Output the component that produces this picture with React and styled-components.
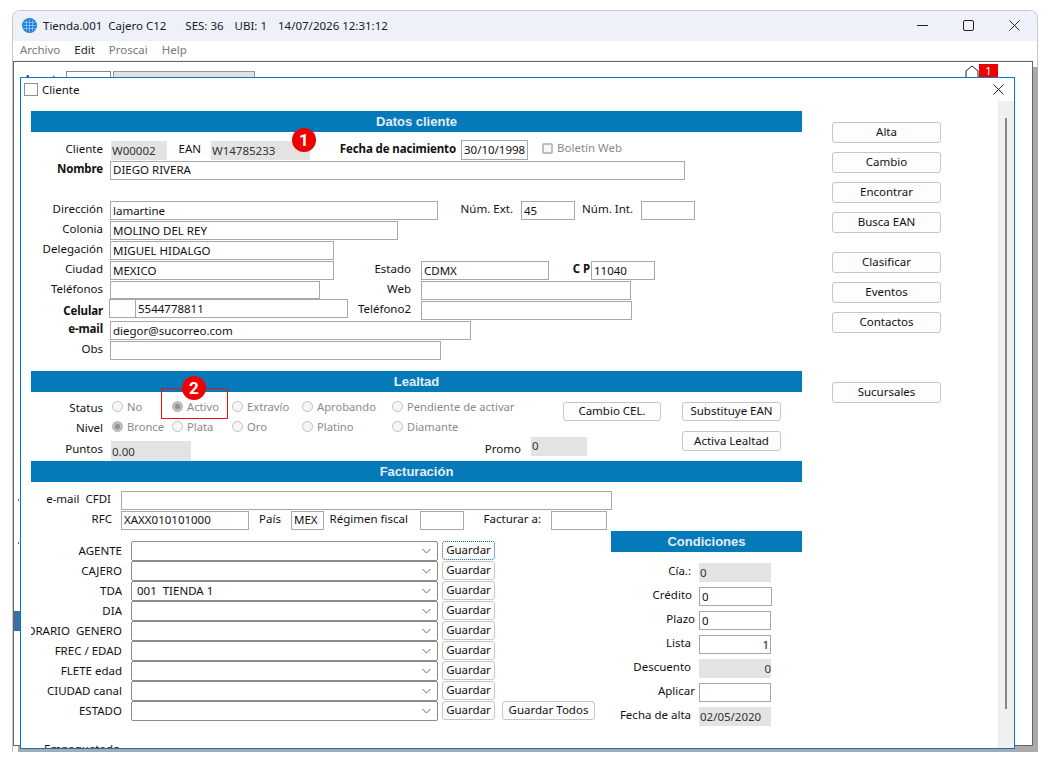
import React from "react";
import styled, { createGlobalStyle } from "styled-components";

const GlobalStyle = createGlobalStyle`
  html, body {
    margin: 0;
    padding: 0;
    background: #ffffff;
  }
  body {
    font-family: "Noto Sans", "Open Sans", sans-serif;
    font-size: 11.5px;
    color: #111111;
  }
`;

const Page = styled.div`
  width: 1049px;
  height: 763px;
  padding: 10px 0 0 12px;
  box-sizing: border-box;
  overflow: hidden;
`;

const AppWindow = styled.div`
  width: 1026px;
  height: 742px;
  display: flex;
  flex-direction: column;
  box-sizing: border-box;
  border: 1px solid #c8c8c8;
  border-bottom: none;
  border-radius: 8px 8px 0 0;
  background: #ffffff;
`;

const TitleBar = styled.div`
  height: 30px;
  flex: none;
  box-sizing: border-box;
  display: flex;
  align-items: center;
  padding: 0 0 1px 9px;
  background: #eef1f9;
  border-radius: 7px 7px 0 0;
  color: #1a1a1a;
`;

const TitleText = styled.span`
  margin-left: ${(p) => p.$ml || 0}px;
  white-space: pre;
`;

const WinButtons = styled.div`
  margin-left: auto;
  display: flex;
  align-self: flex-start;
`;

const WinButton = styled.div`
  width: 46px;
  height: 28px;
  display: flex;
  align-items: center;
  justify-content: center;
`;

const MenuBar = styled.div`
  height: 19px;
  flex: none;
  box-sizing: border-box;
  display: flex;
  align-items: center;
  padding: 0 0 2px 7px;
  gap: 14px;
`;

const MenuItem = styled.span`
  color: ${(p) => (p.$active ? "#222222" : "#777777")};
`;

const Desktop = styled.div`
  position: relative;
  flex: none;
  height: 686px;
  margin-right: 4px;
  border-top: 1px solid #f0f0f0;
  box-sizing: border-box;
`;

const DesktopFrame = styled.div`
  height: 100%;
  box-sizing: border-box;
  border: 1px solid #666666;
  box-shadow: 5px 6px 0 #aaaaaa;
  background: #ffffff;
  padding: 9px 0 0 10px;
  display: flex;
  align-items: flex-start;
`;

const BackLabel = styled.span`
  width: 42px;
  line-height: 16px;
`;

const BackInput = styled.div`
  width: 45px;
  height: 20px;
  box-sizing: border-box;
  border: 1px solid #888888;
  margin-right: 2px;
`;

const BackField = styled.div`
  width: 142px;
  height: 20px;
  box-sizing: border-box;
  background: #e2e2e2;
  border: 1px solid #999999;
  border-bottom: none;
`;

const BackBadge = styled.div`
  margin-left: auto;
  margin-right: 34px;
  margin-top: -7px;
  display: flex;
  align-items: flex-start;
`;

const NotifyCount = styled.span`
  width: 19px;
  height: 13px;
  background: #ee0000;
  color: #ffffff;
  font-size: 11px;
  line-height: 13px;
  text-align: center;
`;

const SideTab = styled.div`
  position: absolute;
  left: 1px;
  top: 550px;
  width: 6px;
  height: 20px;
  background: #3a6ea5;
`;

const SideTick = styled.div`
  position: absolute;
  left: 5px;
  top: ${(p) => p.$top}px;
  width: 1px;
  height: 2px;
  background: #666666;
`;

const ChildWindow = styled.div`
  position: absolute;
  left: 7px;
  top: 16px;
  width: 995px;
  height: 672px;
  box-sizing: border-box;
  display: flex;
  flex-direction: column;
  background: #ffffff;
  border: 1px solid #0078d7;
  overflow: hidden;
`;

const ChildTitle = styled.div`
  height: 23px;
  flex: none;
  display: flex;
  align-items: center;
  padding-left: 3px;
  gap: 4px;
`;

const ChildIcon = styled.span`
  width: 14px;
  height: 13px;
  box-sizing: border-box;
  border: 1px solid #8f8fa8;
  background: #fffef8;
`;

const ChildClose = styled.div`
  margin-left: auto;
  margin-right: 10px;
  display: flex;
`;

const ChildBody = styled.div`
  flex: 1;
  min-height: 0;
  display: flex;
`;

const Form = styled.div`
  flex: 1;
  display: flex;
  padding: 10px 0 0 10px;
  overflow: hidden;
`;

const MainColumn = styled.div`
  width: 771px;
  flex: none;
`;

const ActionColumn = styled.div`
  display: flex;
  flex-direction: column;
  margin: 11px 0 0 30px;
  gap: 9px;
`;

const Scrollbar = styled.div`
  width: 16px;
  flex: none;
  background: #f0f0f0;
  display: flex;
  justify-content: center;
  padding-top: 17px;
  box-sizing: border-box;
`;

const ScrollThumb = styled.div`
  width: 2px;
  height: 591px;
  background: #888888;
`;

const SectionBar = styled.div`
  height: 21px;
  background: #047abb;
  color: #e4edf5;
  font-family: "Liberation Sans", sans-serif;
  font-weight: 700;
  font-size: 13px;
  line-height: 21px;
  text-align: center;
  margin-top: ${(p) => p.$mt || 0}px;
`;

const Row = styled.div`
  display: flex;
  align-items: flex-start;
  height: ${(p) => p.$h || 20}px;
  margin-top: ${(p) => p.$mt || 0}px;
`;

const Label = styled.span`
  display: flex;
  flex: none;
  justify-content: flex-end;
  width: ${(p) => p.$w}px;
  margin-left: ${(p) => p.$ml || 0}px;
  margin-top: ${(p) => p.$top ?? -2}px;
  line-height: 20px;
  font-weight: ${(p) => (p.$bold ? 700 : 400)};
  letter-spacing: ${(p) => (p.$bold ? "-0.12px" : "normal")};
  white-space: pre;
  overflow: ${(p) => (p.$clip ? "hidden" : "visible")};
`;

const Input = styled.input`
  display: block;
  flex: none;
  box-sizing: border-box;
  width: ${(p) => p.$w}px;
  height: ${(p) => p.$h || 19}px;
  margin: ${(p) => p.$top || 0}px 0 0 ${(p) => p.$ml || 0}px;
  padding: 0 1px ${(p) => p.$pb || 0}px 2px;
  border: 1px solid #a8a8a8;
  border-radius: 0;
  outline: none;
  background: #ffffff;
  color: #111111;
  font: inherit;
  text-align: ${(p) => (p.$right ? "right" : "left")};
`;

const GreyField = styled.div`
  flex: none;
  box-sizing: border-box;
  position: relative;
  width: ${(p) => p.$w}px;
  height: ${(p) => p.$h || 19}px;
  margin: ${(p) => p.$top || 0}px 0 0 ${(p) => p.$ml || 0}px;
  padding: ${(p) => p.$pt ?? 2}px 0 0 1px;
  background: #e3e3e3;
  color: #333333;
  line-height: 16px;
  text-align: ${(p) => (p.$right ? "right" : "left")};
`;

const Badge = styled.span`
  position: absolute;
  left: ${(p) => p.$x}px;
  top: ${(p) => p.$y}px;
  width: 24px;
  height: 24px;
  border-radius: 50%;
  background: radial-gradient(circle at 50% 45%, #f00000 60%, #d80000 100%);
  color: #ffffff;
  font-family: "Roboto", "Liberation Sans", sans-serif;
  font-weight: 700;
  font-size: 17px;
  line-height: 24px;
  text-align: center;
  z-index: 2;
`;

const WebCheck = styled.span`
  display: flex;
  align-items: center;
  margin-left: ${(p) => p.$ml}px;
  color: #8a8a8a;
  line-height: 16px;
  gap: 4px;
`;

const CheckBox = styled.span`
  width: 11px;
  height: 11px;
  box-sizing: border-box;
  border: 2px solid #bdbdbd;
  border-radius: 2px;
  background: #f6f6f6;
`;

const RadioGroup = styled.div`
  display: flex;
  flex: none;
  margin-left: 9px;
`;

const RadioItem = styled.span`
  display: flex;
  flex: none;
  align-items: center;
  position: relative;
  gap: 4px;
  width: ${(p) => p.$w}px;
  height: 17px;
  color: #8a8a8a;
  font-size: 11.2px;
  white-space: nowrap;
`;

const RadioDot = styled.span`
  width: 11px;
  height: 11px;
  flex: none;
  box-sizing: border-box;
  border-radius: 50%;
  border: ${(p) => (p.$on ? "3px solid #bcbcbc" : "1px solid #c0c0c0")};
  background: ${(p) => (p.$on ? "#8f8f8f" : "#f6f6f6")};
`;

const Highlight = styled.span`
  position: absolute;
  left: -11px;
  top: -10px;
  width: 67px;
  height: 31px;
  box-sizing: border-box;
  border: 1px solid #e81010;
  pointer-events: none;
`;

const Button = styled.button`
  display: block;
  flex: none;
  box-sizing: border-box;
  width: ${(p) => p.$w}px;
  height: ${(p) => p.$h || 19}px;
  margin: ${(p) => p.$top || 0}px 0 ${(p) => p.$mb || 0}px ${(p) => p.$ml || 0}px;
  padding: 0 0 2px;
  border: 1px solid #c6c6c6;
  border-radius: 3px;
  background: #fdfdfd;
  color: #111111;
  font: inherit;
  ${(p) => p.$focused && "border: 1px dotted #0a5fa8;"}
`;

const Billing = styled.div`
  display: flex;
`;

const SelectColumn = styled.div`
  width: 580px;
  flex: none;
  padding-top: 10px;
`;

const ConditionColumn = styled.div`
  width: 191px;
  flex: none;
`;

const ConditionRows = styled.div`
  padding-top: 11px;
`;

const Select = styled.div`
  flex: none;
  box-sizing: border-box;
  width: 307px;
  height: 20px;
  margin-left: 9px;
  padding-right: 6px;
  display: flex;
  align-items: center;
  justify-content: space-between;
  border: 1px solid #8c8c8c;
  border-radius: 2px;
  background: #ffffff;
`;

const SelectText = styled.span`
  padding: 0 0 2px 5px;
  white-space: pre;
`;

const Chevron = () => (
  <svg width="9" height="6" viewBox="0 0 9 6" fill="none" stroke="#666" strokeWidth="1">
    <path d="M.5 1 4.5 5 8.5 1" />
  </svg>
);

const CloseIcon = () => (
  <svg width="11" height="11" viewBox="0 0 11 11" fill="none" stroke="#222" strokeWidth="1">
    <path d="M.5.5l10 10M10.5.5l-10 10" />
  </svg>
);

const Globe = () => (
  <svg width="15" height="15" viewBox="0 0 15 15">
    <circle cx="7.5" cy="7.5" r="7.5" fill="#1d7fe0" />
    <g stroke="#9fd0f8" strokeWidth=".7" fill="none">
      <path d="M4.5 2v11M7.5 1v13M10.5 2v11M1.5 4.5h12M1 7.5h13M1.5 10.5h12" />
    </g>
  </svg>
);

const statusOptions = [
  { label: "No", w: 60 },
  { label: "Activo", w: 60, on: true, marked: true },
  { label: "Extravío", w: 70 },
  { label: "Aprobando", w: 90 },
  { label: "Pendiente de activar", w: 130 },
];

const levelOptions = [
  { label: "Bronce", w: 60, on: true },
  { label: "Plata", w: 60 },
  { label: "Oro", w: 70 },
  { label: "Platino", w: 90 },
  { label: "Diamante", w: 130 },
];

const selects = [
  { label: "AGENTE", focused: true },
  { label: "CAJERO" },
  { label: "TDA", value: "001  TIENDA 1" },
  { label: "DIA" },
  { label: "HORARIO  GENERO" },
  { label: "FREC / EDAD" },
  { label: "FLETE edad" },
  { label: "CIUDAD canal" },
  { label: "ESTADO", all: true },
];

const actions = [
  { label: "Alta" },
  { label: "Cambio" },
  { label: "Encontrar" },
  { label: "Busca EAN", mb: 10 },
  { label: "Clasificar" },
  { label: "Eventos" },
  { label: "Contactos", mb: 40 },
  { label: "Sucursales" },
];

const RadioRow = ({ options }) => (
  <RadioGroup>
    {options.map((o) => (
      <RadioItem key={o.label} $w={o.w}>
        <RadioDot $on={o.on} />
        {o.label}
        {o.marked && (
          <>
            <Highlight />
            <Badge $x={10} $y={-22}>2</Badge>
          </>
        )}
      </RadioItem>
    ))}
  </RadioGroup>
);

export default function App() {
  return (
    <Page>
      <GlobalStyle />
      <AppWindow>
        <TitleBar>
          <Globe />
          <TitleText $ml={6}>Tienda.001  Cajero C12</TitleText>
          <TitleText $ml={19}>SES: 36</TitleText>
          <TitleText $ml={11}>UBI: 1</TitleText>
          <TitleText $ml={11}>14/07/2026 12:31:12</TitleText>
          <WinButtons>
            <WinButton>
              <svg width="11" height="11" viewBox="0 0 11 11" stroke="#222"><path d="M0 5.5h11" /></svg>
            </WinButton>
            <WinButton>
              <svg width="11" height="11" viewBox="0 0 11 11" fill="none" stroke="#222"><rect x=".5" y=".5" width="10" height="10" rx="1.5" /></svg>
            </WinButton>
            <WinButton>
              <CloseIcon />
            </WinButton>
          </WinButtons>
        </TitleBar>
        <MenuBar>
          <MenuItem>Archivo</MenuItem>
          <MenuItem $active>Edit</MenuItem>
          <MenuItem>Proscai</MenuItem>
          <MenuItem>Help</MenuItem>
        </MenuBar>
        <Desktop>
          <DesktopFrame>
            <BackLabel>Agente</BackLabel>
            <BackInput />
            <BackField />
            <BackBadge>
              <svg width="14" height="20" viewBox="0 0 14 20" fill="none" stroke="#222" strokeWidth="1">
                <path d="M1 19V7l6-5 6 5v12" />
              </svg>
              <NotifyCount>1</NotifyCount>
            </BackBadge>
          </DesktopFrame>
          <SideTab />
          <SideTick $top={438} />
          <SideTick $top={481} />
          <ChildWindow>
            <ChildTitle>
              <ChildIcon />
              Cliente
              <ChildClose>
                <CloseIcon />
              </ChildClose>
            </ChildTitle>
            <ChildBody>
              <Form>
                <MainColumn>
                  <SectionBar>Datos cliente</SectionBar>
                  <Row $h={21} $mt={8}>
                    <Label $w={72} $top={-1}>Cliente</Label>
                    <GreyField $w={56} $ml={8} $top={1}>W00002</GreyField>
                    <Label $w={23} $ml={11} $top={-1}>EAN</Label>
                    <GreyField $w={99} $ml={10} $top={1}>
                      W14785233
                      <Badge $x={81} $y={-13}>1</Badge>
                    </GreyField>
                    <Label $w={114} $ml={32} $top={-1} $bold>Fecha de nacimiento</Label>
                    <Input $w={67} $ml={5} $h={20} $pb={2} defaultValue="30/10/1998" readOnly />
                    <WebCheck $ml={14}>
                      <CheckBox />
                      Boletín Web
                    </WebCheck>
                  </Row>
                  <Row>
                    <Label $w={72} $bold>Nombre</Label>
                    <Input $w={575} $ml={7} $pb={2} defaultValue="DIEGO RIVERA" readOnly />
                  </Row>
                  <Row $mt={20}>
                    <Label $w={72}>Dirección</Label>
                    <Input $w={328} $ml={7} defaultValue="lamartine" readOnly />
                    <Label $w={51} $ml={24}>Núm. Ext.</Label>
                    <Input $w={54} $ml={8} defaultValue="45" readOnly />
                    <Label $w={51} $ml={7}>Núm. Int.</Label>
                    <Input $w={54} $ml={8} readOnly />
                  </Row>
                  <Row>
                    <Label $w={72}>Colonia</Label>
                    <Input $w={288} $ml={7} defaultValue="MOLINO DEL REY" readOnly />
                  </Row>
                  <Row>
                    <Label $w={72}>Delegación</Label>
                    <Input $w={224} $ml={7} defaultValue="MIGUEL HIDALGO" readOnly />
                  </Row>
                  <Row>
                    <Label $w={72}>Ciudad</Label>
                    <Input $w={224} $ml={7} defaultValue="MEXICO" readOnly />
                    <Label $w={35} $ml={42}>Estado</Label>
                    <Input $w={128} $ml={10} defaultValue="CDMX" readOnly />
                    <Label $w={19} $ml={22} $bold>C P</Label>
                    <Input $w={64} $ml={1} defaultValue="11040" readOnly />
                  </Row>
                  <Row $h={18}>
                    <Label $w={72}>Teléfonos</Label>
                    <Input $w={210} $ml={7} $h={18} readOnly />
                    <Label $w={24} $ml={67}>Web</Label>
                    <Input $w={210} $ml={10} readOnly />
                  </Row>
                  <Row $h={22}>
                    <Label $w={72} $top={2} $bold>Celular</Label>
                    <Input $w={27} $ml={6} readOnly />
                    <Input $w={213} $ml={-1} defaultValue="5544778811" readOnly />
                    <Label $w={52} $ml={11} $top={0}>Teléfono2</Label>
                    <Input $w={211} $ml={10} $top={2} readOnly />
                  </Row>
                  <Row>
                    <Label $w={72} $bold>e-mail</Label>
                    <Input $w={361} $ml={7} defaultValue="diegor@sucorreo.com" readOnly />
                  </Row>
                  <Row>
                    <Label $w={72}>Obs</Label>
                    <Input $w={331} $ml={7} readOnly />
                  </Row>
                  <SectionBar $mt={10}>Lealtad</SectionBar>
                  <Row $mt={6}>
                    <Label $w={72} $top={0}>Status</Label>
                    <RadioRow options={statusOptions} />
                    <Button $w={98} $ml={41} $top={4}>Cambio CEL.</Button>
                    <Button $w={99} $ml={21} $top={4}>Substituye EAN</Button>
                  </Row>
                  <Row $h={19}>
                    <Label $w={72} $top={0}>Nivel</Label>
                    <RadioRow options={levelOptions} />
                    <Button $w={99} $ml={160} $top={13} $h={20}>Activa Lealtad</Button>
                  </Row>
                  <Row $h={24}>
                    <Label $w={72} $top={2}>Puntos</Label>
                    <GreyField $w={80} $ml={8} $top={4} $h={20} $pt={3}>0.00</GreyField>
                    <Label $w={36} $ml={294} $top={2}>Promo</Label>
                    <GreyField $w={56} $ml={10} $pt={1}>0</GreyField>
                  </Row>
                  <SectionBar>Facturación</SectionBar>
                  <Row $mt={9}>
                    <Label $w={80}>e-mail  CFDI</Label>
                    <Input $w={491} $ml={10} readOnly />
                  </Row>
                  <Row>
                    <Label $w={81}>RFC</Label>
                    <Input $w={128} $ml={9} $pb={2} defaultValue="XAXX010101000" readOnly />
                    <Label $w={21} $ml={11}>País</Label>
                    <Input $w={33} $ml={10} $pb={2} defaultValue="MEX" readOnly />
                    <Label $w={78} $ml={6}>Régimen fiscal</Label>
                    <Input $w={44} $ml={12} readOnly />
                    <Label $w={55} $ml={22}>Facturar a:</Label>
                    <Input $w={56} $ml={10} readOnly />
                  </Row>
                  <Billing>
                    <SelectColumn>
                      {selects.map((s) => (
                        <Row key={s.label}>
                          <Label $w={91} $top={0} $clip>{s.label}</Label>
                          <Select>
                            <SelectText>{s.value}</SelectText>
                            <Chevron />
                          </Select>
                          <Button $w={53} $ml={4} $focused={s.focused}>Guardar</Button>
                          {s.all && <Button $w={93} $ml={7}>Guardar Todos</Button>}
                        </Row>
                      ))}
                      <Row $mt={20}>
                        <Label $w={89}>Empaquetado</Label>
                      </Row>
                    </SelectColumn>
                    <ConditionColumn>
                      <SectionBar>Condiciones</SectionBar>
                      <ConditionRows>
                        <Row $h={24}>
                          <Label $w={80}>Cía.:</Label>
                          <GreyField $w={72} $ml={8}>0</GreyField>
                        </Row>
                        <Row $h={24}>
                          <Label $w={81}>Crédito</Label>
                          <Input $w={73} $ml={7} defaultValue="0" readOnly />
                        </Row>
                        <Row $h={24}>
                          <Label $w={84}>Plazo</Label>
                          <Input $w={72} $ml={4} defaultValue="0" readOnly />
                        </Row>
                        <Row $h={24}>
                          <Label $w={80}>Lista</Label>
                          <Input $w={72} $ml={8} defaultValue="1" $right readOnly />
                        </Row>
                        <Row $h={24}>
                          <Label $w={80}>Descuento</Label>
                          <GreyField $w={72} $ml={8} $right>0</GreyField>
                        </Row>
                        <Row $h={24}>
                          <Label $w={84}>Aplicar</Label>
                          <Input $w={72} $ml={4} readOnly />
                        </Row>
                        <Row $h={24}>
                          <Label $w={80}>Fecha de alta</Label>
                          <GreyField $w={72} $ml={8}>02/05/2020</GreyField>
                        </Row>
                      </ConditionRows>
                    </ConditionColumn>
                  </Billing>
                </MainColumn>
                <ActionColumn>
                  {actions.map((a) => (
                    <Button key={a.label} $w={109} $h={21} $mb={a.mb}>{a.label}</Button>
                  ))}
                </ActionColumn>
              </Form>
              <Scrollbar>
                <ScrollThumb />
              </Scrollbar>
            </ChildBody>
          </ChildWindow>
        </Desktop>
      </AppWindow>
    </Page>
  );
}
